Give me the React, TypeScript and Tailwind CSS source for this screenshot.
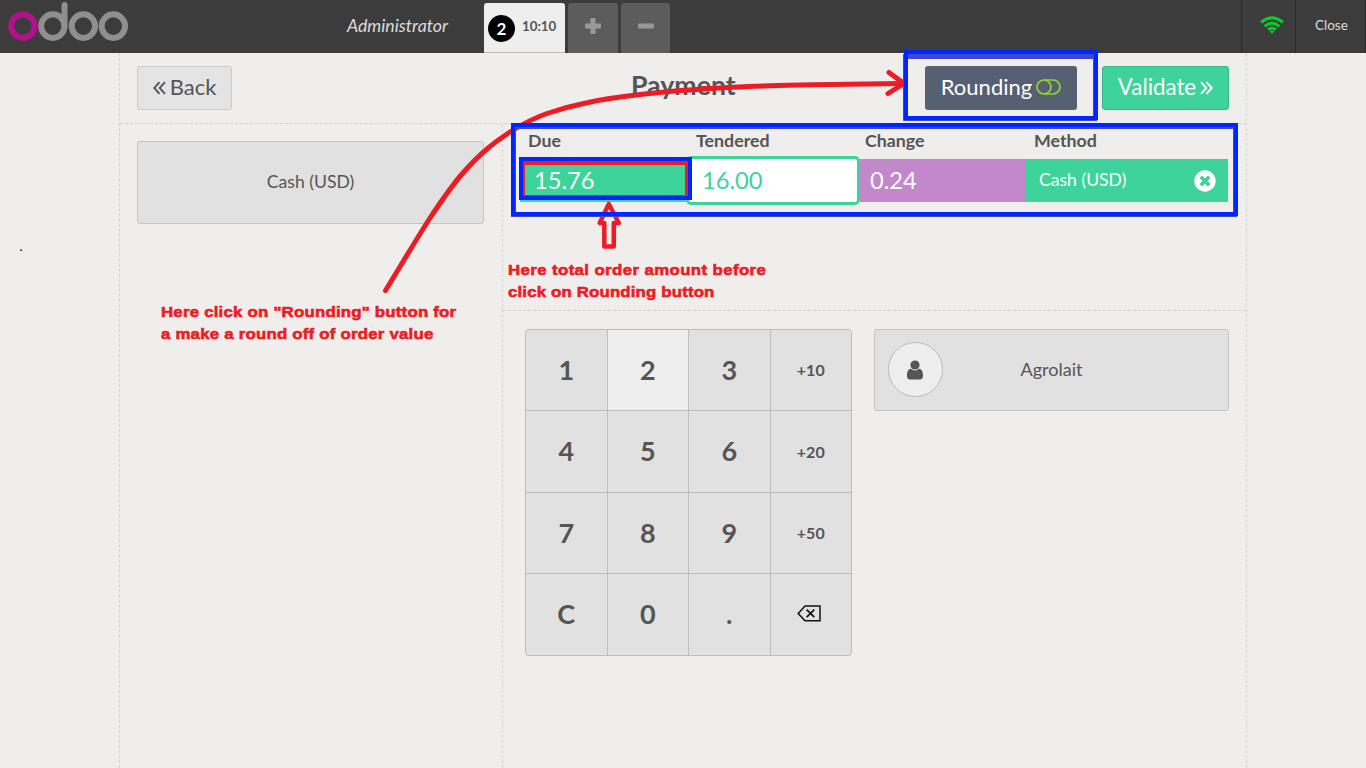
import React from 'react';

const keys = ['1', '2', '3', '+10', '4', '5', '6', '+20', '7', '8', '9', '+50', 'C', '0', '.', 'back'];

function Logo() {
  return (
    <svg width="121" height="42" viewBox="0 0 122 42" preserveAspectRatio="none" fill="none" strokeWidth="6">
      <g stroke="#8f8f8f">
        <circle cx="45.2" cy="25.1" r="11.8" />
        <circle cx="76" cy="25.1" r="11.8" />
        <circle cx="106.2" cy="25.1" r="11.8" />
        <path d="M57 25V4" strokeLinecap="round" />
      </g>
      <circle cx="15" cy="25.1" r="11.8" stroke="#b1128a" />
    </svg>
  );
}

function DoubleAngle({ right = false }: { right?: boolean }) {
  return (
    <svg className="-mt-px" width="13" height="14" viewBox="0 0 13 14" fill="none" stroke="currentColor" strokeWidth="1.9">
      {right ? <path d="M1 1.2 6.3 7 1 12.8M6.5 1.2 11.8 7 6.5 12.8" /> : <path d="M6.5 1.2 1.2 7l5.3 5.8M12 1.2 6.7 7 12 12.8" />}
    </svg>
  );
}

function Backspace() {
  return (
    <svg className="mb-0.5 mr-[3px]" width="24" height="17" viewBox="0 0 24 17" fill="none" stroke="#111" strokeWidth="1.5">
      <path d="M8 1h15v14.8H8L1.2 8.4Z" />
      <path d="m9.7 4.7 7.6 7.5m0-7.5-7.6 7.5" strokeWidth="1.7" />
    </svg>
  );
}

function Wifi() {
  return (
    <svg width="24" height="18" viewBox="0 0 24 18" fill="none" stroke="#0fc82c" strokeWidth="3.1">
      <path d="M1.2 6.5Q12-2.8 22.8 6.5" />
      <path d="M4.7 10.3Q12 4 19.3 10.3" />
      <path d="M8.2 13.8Q12 10.6 15.8 13.8" />
      <path d="M9.7 15.2Q12 13.8 14.3 15.2L12 17.8Z" fill="#0fc82c" stroke="none" />
    </svg>
  );
}

function Annotations() {
  return (
    <div className="pointer-events-none absolute inset-0">
      <svg className="absolute inset-0" width="1366" height="768" fill="none">
        <g stroke="#ed1c24" strokeWidth="5" strokeLinecap="round" strokeLinejoin="round">
          <path d="M385.5 290.5C400 267 414 243 430 218C440 203 450 188 462 174C470 165 478 156.5 487 149C495 142 504 136 513 130C524 123.5 535 117.5 547 113.5C560 109 573 105.5 587 102.7C604 98.8 622 96.5 640 94.5C671 91 702 89 733 87.3C760 86 787 85.2 813 84.7L902 83.5" />
          <path d="M889 72.5 904 83.5 888 93.5" />
          <path d="M608.8 204 599.7 223H604.3V246.5H613.8V223H618.8Z" strokeWidth="4.5" />
        </g>
        <g stroke="#3f48cc">
          <path d="M906 56.5H1095" strokeWidth="5" />
          <path d="M903.5 54V120.5H1097M1093.5 54V118" />
          <path d="M513 128H1236" strokeWidth="2" />
          <path d="M515.5 127V213M1233.5 127V213M511 216.5H1237" />
        </g>
        <g stroke="#0026ff" strokeWidth="4">
          <rect x="906" y="52" width="190" height="66" />
          <rect x="513" y="125" width="723" height="89" />
          <rect x="521" y="159" width="169" height="39" />
        </g>
        <path fill="#ed1c24" d="M523 161H688V196H523ZM525 165V195H685V165Z" fillRule="evenodd" />
      </svg>
      <p className="absolute left-[161px] top-[301px] origin-left scale-x-[1.12] whitespace-nowrap font-['Liberation_Sans',sans-serif] text-[15px] font-bold leading-[22px] tracking-[0.2px] text-[#ed1c24] [-webkit-text-stroke:0.6px_#ed1c24]">
        Here click on "Rounding" button for<br />a make a round off of order value
      </p>
      <p className="absolute left-[508px] top-[259px] origin-left scale-x-[1.12] whitespace-nowrap font-['Liberation_Sans',sans-serif] text-[15px] font-bold leading-[22px] tracking-[0.35px] text-[#ed1c24] [-webkit-text-stroke:0.6px_#ed1c24]">
        Here total order amount before<br /><span className="tracking-[0.15px]">click on Rounding button</span>
      </p>
    </div>
  );
}

export default function App() {
  return (
    <div className="relative flex h-[768px] w-[1366px] flex-col overflow-hidden bg-[#efeeec] font-[Lato,sans-serif] text-[#555]">
      <header className="flex h-[53px] shrink-0 bg-[#3c3c3c]">
        <div className="w-[347px] pl-2 pt-px"><Logo /></div>
        <div className="w-[137px] pt-[13px] text-[17.7px] italic leading-[26px] text-[#ddd]">Administrator</div>
        <div className="flex gap-[3px] pt-[3px]">
          <div className="flex w-[81px] rounded-t-[3px] border-b border-[#bbb] bg-[#eee] pl-1">
            <span className="mt-3 flex size-[27px] items-center justify-center rounded-full bg-black pt-px text-[17px] font-bold text-white">2</span>
            <span className="ml-[7px] pt-[13px] text-[13.3px] font-bold leading-5">10:10</span>
          </div>
          <div className="flex w-[50px] justify-center rounded-t-[3px] bg-[#5c5c5c] pt-[15px]">
            <svg width="16" height="16" fill="#999"><rect x="5.5" width="5" height="16" rx="1" /><rect y="5.5" width="16" height="5" rx="1" /></svg>
          </div>
          <div className="flex w-[49px] justify-center rounded-t-[3px] bg-[#5c5c5c] pt-[15px]">
            <svg width="16" height="16" fill="#999"><rect y="5.5" width="16" height="5" rx="1" /></svg>
          </div>
        </div>
        <div className="ml-auto flex w-[54px] justify-center border-l border-[#292929] pl-1.5 pt-4"><Wifi /></div>
        <div className="w-[71px] border-x border-[#292929] pl-[19px] pt-4 text-[13.5px] leading-[19px] text-[#ddd]">Close</div>
      </header>

      <main className="ml-[119px] flex w-[1128px] flex-1 flex-col border-x border-dashed border-[#d3d3d3]">
        <div className="flex h-[71px] shrink-0 border-b border-dashed border-[#d3d3d3] pt-[13px]">
          <button className="ml-[17px] flex h-11 w-[95px] items-center justify-center gap-1 rounded-[3px] border border-[#ccc] bg-[#e4e4e4] text-[22px]"><DoubleAngle /><span className="-mt-1">Back</span></button>
          <h1 className="ml-[399px] w-[294px] text-[26.7px] font-bold leading-[39px]">Payment</h1>
          <button className="flex h-11 w-[152px] items-center justify-center gap-1 rounded-[3px] bg-[#566070] text-[22px] text-white">
            <span className="-mt-1">Rounding</span>
            <svg className="-mt-[3px]" width="25" height="16" fill="none" stroke="#8fd52e" strokeWidth="1.7"><rect x="1" y="1" width="23" height="14" rx="7" /><path d="M8 1a7 7 0 0 1 0 14" /></svg>
          </button>
          <button className="ml-[25px] flex h-11 w-[127px] items-center justify-center gap-1 rounded-[3px] border border-[#36b888] bg-[#3dd39a] text-[22.3px] text-white"><span className="-mt-0.5">Validate</span><DoubleAngle right /></button>
        </div>
        <div className="flex flex-1">
          <section className="w-[382px] pl-[17px] pt-[17px]">
            <button className="h-[83px] w-[347px] rounded-[3px] border border-[#c5c5c5] bg-[#e1e1e1] text-[17.6px]">Cash (USD)</button>
          </section>
          <section className="flex flex-1 flex-col border-l border-dashed border-[#d3d3d3]">
            <div className="h-[187px] shrink-0 border-b border-dashed border-[#d3d3d3] pl-[17px]">
              <div className="grid h-[35px] w-[708px] grid-cols-[168px_169px_169px_202px] text-[17.8px] font-bold leading-[32px]">
                <div className="pl-2">Due</div><div className="pl-2">Tendered</div><div className="pl-2">Change</div><div className="pl-2">Method</div>
              </div>
              <div className="grid h-[43px] w-[708px] grid-cols-[166px_174px_166px_202px] grid-rows-[43px] text-[23.7px] leading-[42px] text-white">
                <div className="bg-[#3dd39a] pl-[14px]">15.76</div>
                <div className="-my-[3px] rounded-[5px] border-3 border-[#3dd39a] bg-white pl-[13px] text-[#3dd39a]">16.00</div>
                <div className="bg-[#c387cc] pl-[10px]">0.24</div>
                <div className="flex items-center justify-between bg-[#3dd39a] pl-[13px] pr-3 text-[17.6px]">
                  <span className="-mt-0.5">Cash (USD)</span>
                  <svg width="22" height="22"><circle cx="11" cy="11" r="10.7" fill="white" /><path d="m6.8 6.8 8.4 8.4m0-8.4-8.4 8.4" stroke="#3dd39a" strokeWidth="3.7" /></svg>
                </div>
              </div>
            </div>
            <div className="flex pl-[22px] pt-[18px]">
              <div className="grid h-[327px] w-[327px] grid-cols-4 grid-rows-[80px_81px_80px_81px] gap-px overflow-hidden rounded-[4px] border border-[#bdbdbd] bg-[#bdbdbd]">
                {keys.map((key, i) => (
                  <button key={key} className={`flex items-center justify-center font-bold ${key === '2' ? 'bg-[#eee]' : 'bg-[#e1e1e1]'} ${i % 4 === 3 ? 'text-[16px]' : 'text-[27px]'}`}>
                    {key === 'back' ? <Backspace /> : key}
                  </button>
                ))}
              </div>
              <button className="relative ml-[22px] flex h-[82px] w-[355px] items-center justify-center rounded-[3px] border border-[#c5c5c5] bg-[#e1e1e1] pb-0.5 text-[18px]">
                <span className="absolute left-[13px] top-3 flex size-[55px] items-center justify-center rounded-full border border-[#bbb] bg-[#eee] pr-px">
                  <svg width="16" height="20" viewBox="0 0 16 20" fill="#555"><circle cx="8" cy="5" r="4.6" /><path d="M3.8 8.7Q8 12.2 12.2 8.7C15 9 16 12 16 16c0 2-1.2 3.5-3 3.5H3c-1.8 0-3-1.5-3-3.5 0-4 1-7 3.8-7.3Z" /></svg>
                </span>
                Agrolait
              </button>
            </div>
          </section>
        </div>
      </main>
      <span className="absolute left-[19px] top-[236px] font-['Liberation_Sans',sans-serif] text-[15px] leading-5 text-black">.</span>
      <Annotations />
    </div>
  );
}
